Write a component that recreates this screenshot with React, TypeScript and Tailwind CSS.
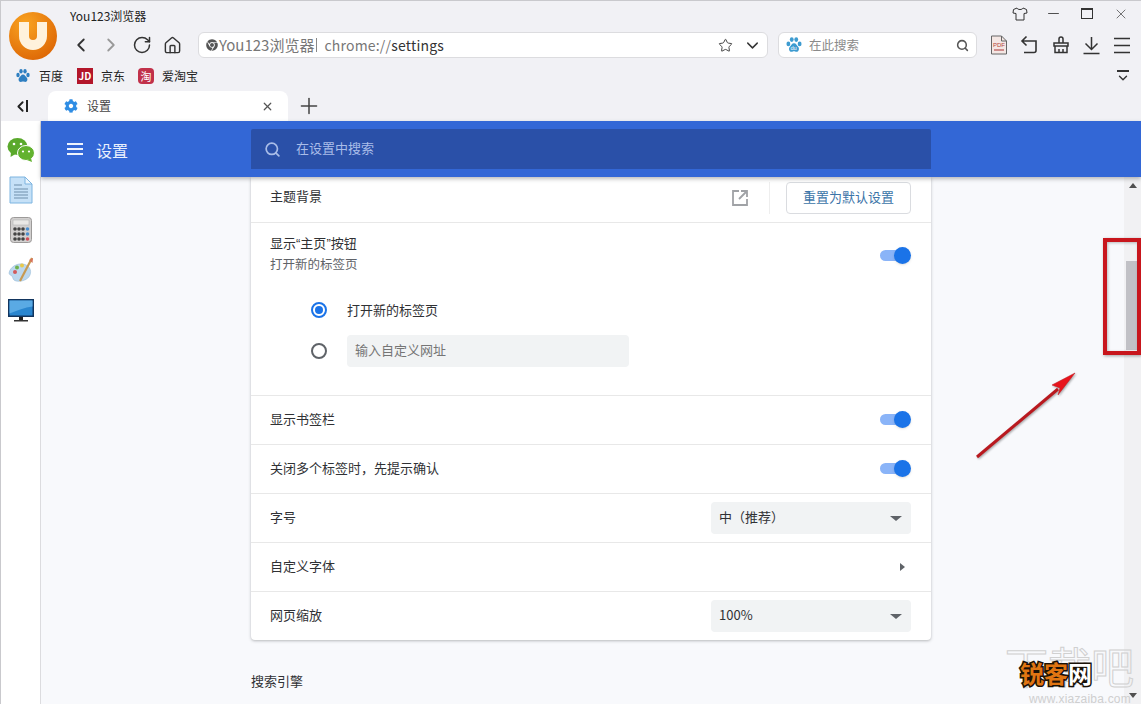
import React from "react";
import { ChevronLeft, ChevronRight, RotateCw, Home, Star, ChevronDown, Search, X, Plus, Minus } from "lucide-react";
import { FaCog, FaChrome } from "react-icons/fa";

const Paw = ({ size = 16, color = "#2f7fc1", du = false }: { size?: number; color?: string; du?: boolean }) => (
  <svg width={size} height={size} viewBox="0 0 16 16">
    <ellipse cx="3" cy="7" rx="1.7" ry="2.2" fill={color} />
    <ellipse cx="6" cy="3.2" rx="1.7" ry="2.2" fill={color} />
    <ellipse cx="10" cy="3.2" rx="1.7" ry="2.2" fill={color} />
    <ellipse cx="13" cy="7" rx="1.7" ry="2.2" fill={color} />
    <path d="M8 6.500c-2 0-2.300 2-3.600 3-1.400 1.100-1 4.500 1.400 4.500 1 0 1.400-.4 2.200-.4s1.200.4 2.200.4c2.400 0 2.800-3.400 1.400-4.500-1.300-1-1.600-3-3.600-3z" fill={color} />
    {du && <text x="4.800" y="12.800" fontSize="5" fill="#fff" fontFamily="Liberation Sans">du</text>}
  </svg>
);

const Toggle = () => (
  <div className="relative w-[31px] h-[18px] shrink-0">
    <div className="absolute left-0 right-[5px] top-[3px] h-[11px] rounded-full bg-[#8ab4f8]" />
    <div className="absolute right-0 top-0 w-[17px] h-[17px] rounded-full bg-[#1a73e8] shadow-sm" />
  </div>
);

const Row = ({ label, children }: { label: string; children?: React.ReactNode }) => (
  <div className="h-[49px] border-t border-[#e8e8e8] pl-[19px] pr-[20px] flex items-center justify-between">
    <span className="text-[13px] text-[#303134] pb-[3px]">{label}</span>
    {children}
  </div>
);

const Select = ({ value }: { value: string }) => (
  <div className="w-[200px] h-[32px] bg-[#f1f3f4] rounded px-2 flex items-center justify-between">
    <span className="text-[13px] text-[#303134] pb-[2px] [text-spacing-trim:space-all]">{value}</span>
    <div className="mr-[1px] w-0 h-0 border-x-[6px] border-x-transparent border-t-[5px] border-t-[#5f6368]" />
  </div>
);

const Radio = ({ on }: { on?: boolean }) => (
  <div className={`w-[16px] h-[16px] rounded-full border-2 flex items-center justify-center ${on ? "border-[#1a73e8]" : "border-[#5f6368]"}`}>
    {on && <div className="w-[8px] h-[8px] rounded-full bg-[#1a73e8]" />}
  </div>
);

const Side = ({ children }: { children: React.ReactNode }) => (
  <div className="h-[40px] flex items-center justify-center">{children}</div>
);

export default function App() {
  return (
    <div className="relative w-[1141px] h-[704px] overflow-hidden flex flex-col bg-[#f8f9fc] border-l border-t border-[#c9c9cd] font-['Noto_Sans_CJK_SC','Liberation_Sans',sans-serif]">
      {/* Browser chrome */}
      <div className="h-[120px] shrink-0 bg-[#f1f1f5] flex flex-col">
        <div className="h-[60px] flex">
          <div className="w-[69px] shrink-0 pl-[8px] pt-[11px]">
            <svg width="48" height="48" viewBox="0 0 48 48">
              <defs>
                <radialGradient id="lg" cx="35%" cy="25%" r="85%">
                  <stop offset="0%" stopColor="#f9a321" />
                  <stop offset="100%" stopColor="#dc6404" />
                </radialGradient>
              </defs>
              <circle cx="24" cy="24" r="24" fill="url(#lg)" />
              <path d="M15 10v14a9 9 0 0 0 18 0V10" fill="none" stroke="#fff2dc" strokeWidth="10" />
            </svg>
          </div>
          <div className="flex-1 flex flex-col min-w-0">
            <div className="h-[29px] flex items-start justify-between">
              <span className="text-[12px] leading-[16px] mt-[7px] text-[#222]">You123浏览器</span>
              <div className="flex items-center gap-[17px] mr-[12px] mt-[4px] text-[#333]">
                <svg width="16" height="16" viewBox="0 0 16 16" fill="none" stroke="#333" strokeWidth="1">
                  <path d="M5 2 1.500 3.500 1 7l3 .5V14h8V7.500l3-.5-.5-3.500L11 2c-.5 2-5.500 2-6 0z" />
                </svg>
                <Minus size={17} strokeWidth={1.2} />
                <div className="w-[12px] h-[11px] mx-[2px] border border-t-2 border-[#333]" />
                <X size={16} strokeWidth={1} className="ml-[1px]" />
              </div>
            </div>
            <div className="h-[26px] mt-[2px] flex items-center">
              <div className="w-[128px] flex items-center text-[#333] shrink-0">
                <ChevronLeft size={22} strokeWidth={2} className="w-[22px]" />
                <ChevronRight size={22} strokeWidth={2} className="ml-[8px] text-[#999]" />
                <RotateCw size={20} strokeWidth={1.8} className="ml-[10px]" />
                <Home size={19} strokeWidth={1.8} className="ml-[11px]" />
              </div>
              <div className="w-[570px] h-[26px] shrink-0 bg-white border border-[#dcdcdf] rounded-md flex items-center pl-[7px] pr-[5px]">
                <FaChrome size={12} className="text-[#555] shrink-0" />
                <span className="text-[15px] text-[#777] ml-[1px] whitespace-nowrap">You123浏览器</span>
                <span className="w-px h-[14px] bg-[#888] ml-[2px] mr-[7px]" />
                <span className="text-[14px] tracking-[0.2px] text-[#777] whitespace-nowrap">chrome://<span className="text-[#333]">settings</span></span>
                <div className="flex-1" />
                <Star size={15} strokeWidth={1.6} className="text-[#444]" />
                <ChevronDown size={19} strokeWidth={1.8} className="ml-[10px] text-[#333]" />
              </div>
              <div className="ml-[10px] w-[199px] h-[26px] shrink-0 bg-white border border-[#dcdcdf] rounded-md flex items-center pl-[6px] pr-[7px]">
                <Paw size={18} color="#3d9bd0" du />
                <span className="text-[12.5px] text-[#8a8a8a] ml-[6px]">在此搜索</span>
                <div className="flex-1" />
                <Search size={13} strokeWidth={2.8} className="text-[#555]" />
              </div>
              <div className="ml-[13px] flex items-center gap-[12px] text-[#333]">
                <svg width="18" height="20" viewBox="0 0 18 20">
                  <path d="M1.500 1h10l5 5v13h-15z" fill="#f4e7e4" stroke="#666" />
                  <path d="M11.500 1v5h5" fill="none" stroke="#666" />
                  <text x="3" y="12" fontSize="6" fill="#b5433c" fontFamily="Liberation Sans">PDF</text>
                  <path d="M4 15h10" stroke="#a33" strokeWidth="1" />
                </svg>
                <svg width="20" height="20" viewBox="0 0 20 20" fill="none" stroke="#333" strokeWidth="1.600">
                  <path d="M6.500 1.500 2 6l4.500 4.500M2 6h14v9.500a2 2 0 0 1-2 2H4" />
                </svg>
                <svg width="18" height="18" viewBox="0 0 18 18" fill="none" stroke="#333" strokeWidth="1.500">
                  <path d="M7 7V3a2 2 0 0 1 4 0v4M2 7h14v3H2zM3 10v6.500h12V10M7 13v3.500M11 13v3.500" />
                </svg>
                <svg width="19" height="19" viewBox="0 0 19 19" fill="none" stroke="#333" strokeWidth="1.500">
                  <path d="M9.500 1v12M3.500 7.500l6 6 6-6M1.500 17.500h16" />
                </svg>
                <svg width="18" height="17" viewBox="0 0 18 17" fill="none" stroke="#333" strokeWidth="1.300">
                  <path d="M1 1.500h16M1 8.500h16M1 15.500h16" />
                </svg>
              </div>
            </div>
          </div>
        </div>
        <div className="h-[28px] flex items-center justify-between pl-[14px] pr-[11px] pt-[1px]">
          <div className="flex items-center text-[12px] text-[#222]">
            <Paw size={16} color="#2f7fc1" />
            <span className="ml-[8px]">百度</span>
            <span className="ml-[14px] w-[16px] h-[16px] bg-[#b3162a] text-white text-[10px] leading-[16px] text-center font-bold">JD</span>
            <span className="ml-[8px]">京东</span>
            <span className="ml-[13px] w-[16px] h-[16px] rounded-sm bg-[#c1314a] text-white text-[11px] leading-[16px] text-center">淘</span>
            <span className="ml-[8px]">爱淘宝</span>
          </div>
          <div className="flex flex-col items-center text-[#333] w-[14px] pt-[4px]">
            <div className="w-[12px] h-[2px] bg-[#333]" />
            <ChevronDown size={14} strokeWidth={2.4} className="-mt-[1px]" />
          </div>
        </div>
        <div className="h-[32px] flex items-end">
          <div className="w-[47px] h-[30px] flex items-center justify-center text-[#222] pr-[10px]">
            <ChevronLeft size={17} strokeWidth={2.6} />
            <span className="w-[2px] h-[12px] bg-[#222] -ml-[3px]" />
          </div>
          <div className="w-[240px] h-[30px] bg-white rounded-t-lg flex items-center pl-[16px] pr-[14px]">
            <FaCog size={14} className="text-[#2f8de4]" />
            <span className="text-[12px] text-[#444] ml-[9px]">设置</span>
            <div className="flex-1" />
            <X size={13} strokeWidth={2.2} className="text-[#555]" />
          </div>
          <div className="h-[30px] flex items-center ml-[8px]">
            <Plus size={26} strokeWidth={1.4} className="text-[#444]" />
          </div>
        </div>
      </div>

      {/* Body */}
      <div className="flex-1 min-h-0 flex">
        <div className="w-[40px] shrink-0 bg-white border-r border-[#dcdcdf] pt-[9px] flex flex-col">
          <Side>
            <svg width="28" height="26" viewBox="0 0 28 26">
              <ellipse cx="10.500" cy="9.500" rx="10" ry="8.500" fill="#5aa92c" />
              <path d="M4 15l-.5 5 5-3z" fill="#5aa92c" />
              <ellipse cx="19" cy="16" rx="8.500" ry="7.500" fill="#62b22f" stroke="#fff" strokeWidth="1" />
              <path d="M24 21l1 4-5-2z" fill="#62b22f" />
              <circle cx="7" cy="7" r="1.300" fill="#fff" />
              <circle cx="14" cy="7" r="1.300" fill="#fff" />
              <circle cx="16" cy="14.500" r="1.100" fill="#fff" />
              <circle cx="22" cy="14.500" r="1.100" fill="#fff" />
            </svg>
          </Side>
          <Side>
            <svg width="24" height="28" viewBox="0 0 24 28">
              <path d="M1 1h15l7 7v19H1z" fill="#c6e1f7" stroke="#7db4e0" />
              <path d="M16 1v7h7z" fill="#eaf5fd" stroke="#7db4e0" />
              <path d="M5 9h8M5 13h14M5 16h14M5 19h14M5 22h14" stroke="#6f8fab" />
            </svg>
          </Side>
          <Side>
            <svg width="22" height="26" viewBox="0 0 22 26">
              <rect x=".5" y=".5" width="21" height="25" rx="3" fill="#d2d0cf" stroke="#9c9a99" />
              <rect x="3" y="3" width="16" height="5" fill="#e9e8e6" stroke="#aaa" strokeWidth=".5" />
              <g fill="#444">
                <circle cx="5" cy="12" r="1.800" /><circle cx="9" cy="12" r="1.800" /><circle cx="13" cy="12" r="1.800" />
                <circle cx="5" cy="17" r="1.800" /><circle cx="9" cy="17" r="1.800" /><circle cx="13" cy="17" r="1.800" />
                <circle cx="5" cy="22" r="1.800" /><circle cx="9" cy="22" r="1.800" /><circle cx="13" cy="22" r="1.800" />
              </g>
              <circle cx="17.500" cy="12" r="1.800" fill="#4b8fd0" />
              <circle cx="17.500" cy="17" r="1.800" fill="#4b8fd0" />
              <circle cx="17.500" cy="22" r="1.800" fill="#d0505a" />
            </svg>
          </Side>
          <Side>
            <svg width="26" height="26" viewBox="0 0 26 26">
              <path d="M1 16c1-6 8-10 14-9 6 1 9 6 7 11-2 5-9 7-14 6-3-.6-3-3-4-5-1-1-3-1-3-3z" fill="#bcd8ee" stroke="#8fb4d2" strokeWidth=".5" />
              <circle cx="7" cy="15" r="2" fill="#d25a5a" />
              <circle cx="9" cy="10.500" r="2" fill="#6fb24e" />
              <circle cx="14" cy="8.500" r="2" fill="#e8c94a" />
              <path d="M24 1 12 24" stroke="#c79a52" strokeWidth="2.200" />
              <path d="M21 3 25 1l-.5 5z" fill="#d6745a" />
            </svg>
          </Side>
          <Side>
            <svg width="26" height="23" viewBox="0 0 26 23">
              <rect x="0" y="0" width="26" height="18" fill="#12355e" />
              <rect x="1.500" y="1.500" width="23" height="15" fill="#2a86cf" />
              <path d="M1.500 1.500h23v6c-8 1-15 4-23 7z" fill="#5aaae4" />
              <rect x="11" y="18" width="4" height="3" fill="#222" />
              <rect x="6" y="21" width="14" height="1.500" fill="#333" />
            </svg>
          </Side>
        </div>

        <div className="flex-1 min-w-0 flex flex-col">
          <div className="relative z-10 h-[56px] shrink-0 bg-[#3367d6] shadow-[0_2px_4px_rgba(60,64,67,0.35)] flex items-center">
            <div className="w-[210px] shrink-0 flex items-center pl-[26px] text-[#eaf0fc]">
              <svg width="16" height="12" viewBox="0 0 16 12" fill="none" stroke="#eef3fd" strokeWidth="2">
                <path d="M0 1h16M0 6h16M0 11h16" />
              </svg>
              <span className="ml-[13px] text-[16px] pt-[1px]">设置</span>
            </div>
            <div className="w-[680px] h-[40px] bg-[#2a50a8] rounded-t-[2px] flex items-center pl-[13px]">
              <Search size={17} strokeWidth={2.4} className="text-[#a9bde8]" />
              <span className="ml-[15px] text-[13px] text-[#a9bde8] pb-[2px]">在设置中搜索</span>
            </div>
          </div>

          <div className="flex-1 min-h-0 flex">
            <div className="flex-1 min-w-0 pl-[210px] overflow-hidden">
              <div className="w-[680px] bg-white rounded-b shadow-[0_1px_3px_rgba(60,64,67,0.35)]">
                <div className="h-[45px] pl-[19px] pr-[20px] pb-[4px] flex items-center justify-between">
                  <span className="text-[13px] text-[#303134] pb-[3px]">主题背景</span>
                  <div className="flex items-center">
                    <svg width="16" height="16" viewBox="0 0 16 16" fill="none" stroke="#a0a2a6" strokeWidth="1.800">
                      <path d="M7 1H1v14h14V9M9 1h6v6M15 1 7 9" />
                    </svg>
                    <span className="w-px h-[32px] bg-[#eeeeee] ml-[21px] mr-[16px]" />
                    <div className="w-[125px] h-[32px] border border-[#dadce0] rounded flex items-center justify-center text-[13px] text-[#3b74a8] pb-[1px]">重置为默认设置</div>
                  </div>
                </div>
                <div className="border-t border-[#e8e8e8] h-[173px] pl-[19px] pr-[20px]">
                  <div className="flex items-center justify-between pt-[11px]">
                    <div className="flex flex-col">
                      <span className="text-[13px] leading-[20px] text-[#303134] -mt-[1px]">显示<span className="font-['Liberation_Sans']">“</span>主页<span className="font-['Liberation_Sans']">”</span>按钮</span>
                      <span className="text-[12.5px] leading-[20px] text-[#5f6368]">打开新的标签页</span>
                    </div>
                    <div className="pt-[3px]"><Toggle /></div>
                  </div>
                  <div className="pl-[41px] mt-[15px]">
                    <div className="h-[41px] flex items-center">
                      <Radio on />
                      <span className="ml-[20px] text-[13px] text-[#303134]">打开新的标签页</span>
                    </div>
                    <div className="h-[41px] flex items-center">
                      <Radio />
                      <div className="ml-[20px] w-[282px] h-[32px] bg-[#f1f3f4] rounded px-2 pb-[2px] flex items-center text-[13px] text-[#757575]">输入自定义网址</div>
                    </div>
                  </div>
                </div>
                <Row label="显示书签栏"><Toggle /></Row>
                <Row label="关闭多个标签时，先提示确认"><Toggle /></Row>
                <Row label="字号"><Select value="中（推荐）" /></Row>
                <Row label="自定义字体">
                  <div className="mr-[6px] w-0 h-0 border-y-[4px] border-y-transparent border-l-[5px] border-l-[#5f6368]" />
                </Row>
                <Row label="网页缩放"><Select value="100%" /></Row>
              </div>
              <div className="mt-[31px] text-[13px] text-[#303134]">搜索引擎</div>
            </div>
            <div className="w-[17px] shrink-0 bg-[#f1f1f3] flex flex-col items-center pl-[1px]">
              <div className="mt-[6px] w-0 h-0 border-x-[4px] border-x-transparent border-b-[5px] border-b-[#505050]" />
              <div className="mt-[73px] w-[15px] h-[89px] bg-[#c1c1c6]" />
              <div className="flex-1" />
              <div className="mb-[6px] w-0 h-0 border-x-[4px] border-x-transparent border-t-[5px] border-t-[#505050]" />
            </div>
          </div>
        </div>
      </div>

      {/* Annotations drawn on top of the screenshot */}
      <div className="absolute left-[1102px] top-[237px] w-[38px] h-[117px] border-[4px] border-[#c8161d] shadow-[1px_1px_3px_rgba(0,0,0,0.35),inset_1px_1px_3px_rgba(0,0,0,0.25)]" />
      <svg className="absolute left-[969px] top-[364px] drop-shadow-[1px_1px_1px_rgba(0,0,0,0.35)]" width="115" height="100" viewBox="0 0 115 100">
        <path d="M7 92 88 24" stroke="#b9191f" strokeWidth="3" />
        <path d="M105 8 82 20l8 3-2 7z" fill="#e8141c" stroke="#b9191f" strokeWidth=".5" />
      </svg>

      {/* Watermark */}
      <div className="absolute left-[1004px] top-[634px] text-[43px] leading-[60px] whitespace-nowrap text-transparent [-webkit-text-stroke:1px_#d0d0d0]">下载吧</div>
      <div className="absolute left-[1028px] top-[694px] text-[12px] leading-[9px] tracking-[0.2px] text-[#cfcfcf] font-['Liberation_Sans',sans-serif]">www.xiazaiba.com</div>
      <div className="absolute left-[1019px] top-[656px] text-[24px] leading-[32px] font-bold whitespace-nowrap [paint-order:stroke_fill] [-webkit-text-stroke:3px_#1a1208]">
        <span className="text-[#e07512]">锐客</span><span className="text-white">网</span>
      </div>
    </div>
  );
}
